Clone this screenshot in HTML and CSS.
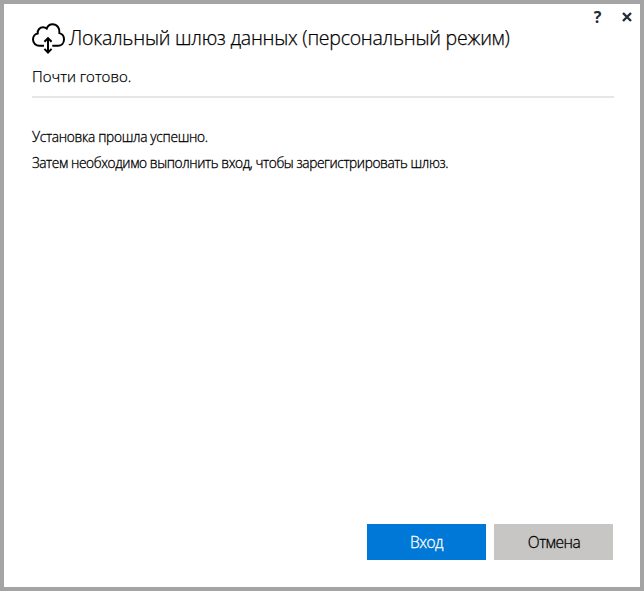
FILE: index.html
```html
<!DOCTYPE html>
<html lang="ru">
<head>
<meta charset="utf-8">
<title>Локальный шлюз данных</title>
<link rel="stylesheet" href="styles.css">
</head>
<body>
<main class="dialog">
  <div class="controls">
    <button class="control help" aria-label="Справка">?</button>
    <button class="control" aria-label="Закрыть">
      <svg width="10" height="10" viewBox="0 0 10 10"><path d="M1 1l8 8M9 1l-8 8" fill="none" stroke="#222b38" stroke-width="2.4"/></svg>
    </button>
  </div>
  <header class="header">
    <svg class="logo" width="34" height="32" viewBox="0 0 34 32" fill="none" stroke="#000" stroke-width="2">
      <path d="M12 22.700H7.400C3.800 22.700 1 20 1 16.600c0-3.300 2.300-5.700 4.700-6.100C5.300 6.800 8 4.300 11 4.300c1.500 0 2.800.5 3.700 1.300C15.700 2.900 17.900 1.200 20.500 1.200c4.600 0 7.600 3.900 6.900 8.900 2.800.7 4.600 3.200 4.600 6.300 0 3.700-2.600 6.300-6 6.300h-5.700"/>
      <path d="M16 15.500v14M12.400 18.800l3.600-3.600 3.600 3.600M12.400 25.900l3.600 3.600 3.600-3.600"/>
    </svg>
    <h1 class="title">Локальный шлюз данных (персональный режим)</h1>
  </header>
  <p class="subtitle">Почти готово.</p>
  <section class="content">
    <p class="result">Установка прошла успешно.</p>
    <p class="next">Затем необходимо выполнить вход, чтобы зарегистрировать шлюз.</p>
  </section>
  <footer class="actions">
    <button class="button primary">Вход</button>
    <button class="button secondary">Отмена</button>
  </footer>
</main>
</body>
</html>
```
FILE: styles.css
```css
* { box-sizing: border-box; margin: 0; padding: 0; }
body { font-family: "Open Sans", "Noto Sans", sans-serif; font-weight: 300; color: #000; background: #fff; }
.dialog { width: 644px; height: 591px; border: 4px solid #a4a4a4; padding: 0 26px 27px 28px; display: flex; flex-direction: column; white-space: nowrap; }
button { border: 0; font: inherit; background: none; }
.controls { height: 18px; display: flex; justify-content: flex-end; gap: 18px; margin-right: -18px; padding-top: 4px; }
.control { width: 11px; height: 18px; display: flex; align-items: center; justify-content: center; color: #222b38; flex: none; }
.help { font-size: 16px; font-weight: 700; line-height: 18px; }
.header { height: 34px; display: flex; align-items: flex-start; }
.logo { flex: none; margin-top: 1px; }
.title { font-size: 19.5px; font-weight: 300; line-height: 32px; margin-left: 3px; letter-spacing: -0.25px; -webkit-text-stroke: 0.25px #000; }
.subtitle { height: 42px; padding-top: 8px; font-size: 15px; -webkit-text-stroke: 0.25px #000; border-bottom: 2px solid #e6e6e6; line-height: 24px; }
.content { padding-top: 26px; font-size: 13.7px; line-height: 26px; letter-spacing: -0.39px; -webkit-text-stroke: 0.3px #000; flex: 1; }
.result { letter-spacing: -0.3px; }
.actions { display: flex; justify-content: flex-end; gap: 8px; margin-right: 1px; }
.button { width: 119px; height: 36px; font-size: 15.5px; line-height: 36px; letter-spacing: -0.5px; -webkit-text-stroke: 0.3px currentColor; }
.primary { background: #0078d7; color: #fff; }
.secondary { background: #c8c6c4; color: #000; padding-left: 1px; }
```
